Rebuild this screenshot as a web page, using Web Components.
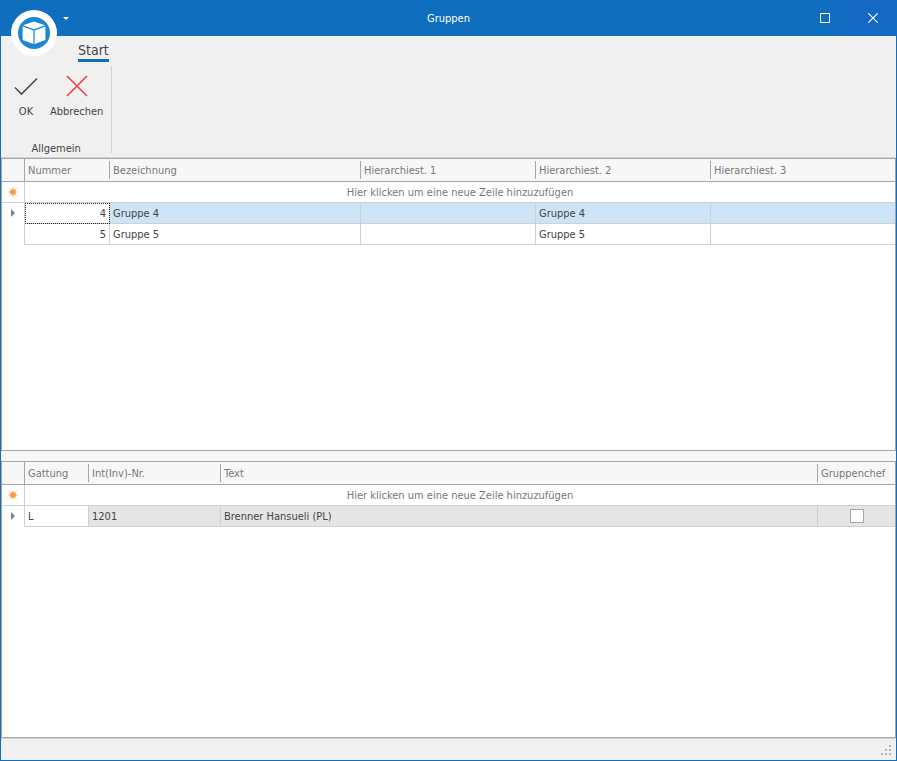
<!DOCTYPE html>
<html lang="de">
<head>
<meta charset="utf-8">
<title>Gruppen</title>
<style>
    html, body {
        height: 100%;
        margin: 0;
    }
    body {
        font: 11px/14px "DejaVu Sans Condensed", "DejaVu Sans", sans-serif;
        color: #444;
    }
</style>
</head>
<body>
<app-window>
    <title-bar slot="title">Gruppen</title-bar>
    <ribbon-bar slot="ribbon" tab="Start">
        <ribbon-group label="Allgemein">
            <ribbon-button icon="check">OK</ribbon-button>
            <ribbon-button icon="cross">Abbrechen</ribbon-button>
        </ribbon-group>
    </ribbon-bar>
    <data-grid id="groups" label="Gruppen"></data-grid>
    <data-grid id="members" label="Mitglieder"></data-grid>
    <status-bar slot="status"></status-bar>
</app-window>

<script>
class AppWindow extends HTMLElement {
    constructor() {
        super();
        this.attachShadow({ mode: 'open' });
    }

    connectedCallback() {
        this.shadowRoot.innerHTML = `
            <style>
                :host {
                    display: flex;
                    flex-direction: column;
                    box-sizing: border-box;
                    height: 100%;
                    border: 1px solid #0f6ebe;
                    border-top: 0;
                    background: #f0f0f0;
                }
                main {
                    flex: 1;
                    min-height: 0;
                    display: flex;
                    flex-direction: column;
                    gap: 10px;
                    background: #f7f7f7;
                }
                ::slotted(#groups) {
                    flex: 293 1 0;
                }
                ::slotted(#members) {
                    flex: 277 1 0;
                }
            </style>
            <slot name="title"></slot>
            <slot name="ribbon"></slot>
            <main><slot></slot></main>
            <slot name="status"></slot>
        `;
    }
}

class TitleBar extends HTMLElement {
    constructor() {
        super();
        this.attachShadow({ mode: 'open' });
    }

    connectedCallback() {
        this.shadowRoot.innerHTML = `
            <style>
                :host {
                    position: relative;
                    display: grid;
                    grid-template-columns: 1fr auto 1fr;
                    align-items: center;
                    height: 36px;
                    background: linear-gradient(90deg, #106ebe 92%, #1469c4 95%);
                    color: #fff;
                }
                button {
                    display: flex;
                    align-items: center;
                    justify-content: center;
                    box-sizing: border-box;
                    height: 36px;
                    padding: 0;
                    border: 0;
                    background: none;
                    color: inherit;
                }
                .logo {
                    position: absolute;
                    left: 10px;
                    top: 10px;
                    width: 46px;
                    height: 46px;
                    z-index: 1;
                }
                .menu {
                    width: 16px;
                    margin-left: 57px;
                }
                .title {
                    padding-top: 2px;
                }
                .buttons {
                    display: flex;
                    justify-content: flex-end;
                }
                .buttons button {
                    width: 48px;
                    padding-left: 2px;
                }
            </style>
            <button class="logo" aria-label="Anwendungsmenü">
                <svg width="46" height="46" viewBox="0 0 46 46">
                    <circle cx="23" cy="23" r="23" fill="#fff"/>
                    <circle cx="23" cy="23" r="16" fill="#1c86d1"/>
                    <path d="M23 11.5 34 15.2 23 19.2 12 15.2Z" fill="#fff"/>
                    <path d="M11.6 16.4 22.4 20.4V34L11.6 30Z" fill="#fff"/>
                    <path d="M34.4 16.4 23.6 20.4V34L34.4 30Z" fill="#fff"/>
                </svg>
            </button>
            <button class="menu" aria-label="Schnellzugriff">
                <svg width="6" height="3" viewBox="0 0 6 3"><path d="M0 0H6L3 3Z" fill="#fff"/></svg>
            </button>
            <span class="title"><slot></slot></span>
            <div class="buttons">
                <button aria-label="Maximieren">
                    <svg width="10" height="10" viewBox="0 0 10 10"><path d="M.5.5H9.5V9.5H.5Z" fill="none" stroke="#fff"/></svg>
                </button>
                <button aria-label="Schliessen">
                    <svg width="10" height="10" viewBox="0 0 10 10"><path d="M.3.3 9.7 9.7M9.7.3.3 9.7" fill="none" stroke="#fff" stroke-width="1.1"/></svg>
                </button>
            </div>
        `;
    }
}

class RibbonBar extends HTMLElement {
    constructor() {
        super();
        this.attachShadow({ mode: 'open' });
    }

    connectedCallback() {
        this.shadowRoot.innerHTML = `
            <style>
                :host {
                    display: block;
                    background: #f0f0f0;
                    border-bottom: 1px solid #d2d2d2;
                }
                nav {
                    display: flex;
                    padding-left: 77px;
                }
                button {
                    height: 26px;
                    padding: 4px 0 0;
                    border: 0;
                    border-bottom: 3px solid #106ebe;
                    background: none;
                    font: inherit;
                    font-size: 14px;
                    color: #444;
                }
                .page {
                    display: flex;
                    padding: 4px 0;
                }
            </style>
            <nav><button>${this.getAttribute('tab')}</button></nav>
            <div class="page"><slot></slot></div>
        `;
    }
}

class RibbonGroup extends HTMLElement {
    constructor() {
        super();
        this.attachShadow({ mode: 'open' });
    }

    connectedCallback() {
        this.shadowRoot.innerHTML = `
            <style>
                :host {
                    display: flex;
                    flex-direction: column;
                    justify-content: space-between;
                    height: 87px;
                    border-right: 1px solid #d2d2d2;
                }
                .items {
                    display: flex;
                    padding: 1px 4px 0 5px;
                }
                .label {
                    line-height: 8px;
                    text-align: center;
                }
            </style>
            <div class="items"><slot></slot></div>
            <div class="label">${this.getAttribute('label')}</div>
        `;
    }
}

const icons = {
    check: '<path d="M5 16.5 11.5 23 27 7.5" fill="none" stroke="#4d4d4d" stroke-width="1.6"/>',
    cross: '<path d="M6 5 26 25M26 5 6 25" fill="none" stroke="#ef4240" stroke-width="1.6"/>'
};

class RibbonButton extends HTMLElement {
    constructor() {
        super();
        this.attachShadow({ mode: 'open' });
    }

    connectedCallback() {
        this.shadowRoot.innerHTML = `
            <style>
                :host {
                    display: block;
                }
                button {
                    display: flex;
                    flex-direction: column;
                    align-items: center;
                    gap: 2px;
                    min-width: 40px;
                    padding: 4px;
                    border: 0;
                    background: none;
                    font: inherit;
                    color: #444;
                }
            </style>
            <button>
                <svg width="32" height="32" viewBox="0 0 32 32">${icons[this.getAttribute('icon')]}</svg>
                <span><slot></slot></span>
            </button>
        `;
    }
}

class DataGrid extends HTMLElement {
    constructor() {
        super();
        this.attachShadow({ mode: 'open' });
    }

    load(columns, rows) {
        const cell = (column, value, row, i) => {
            const classes = [column.align || ''];
            if (row.current && i === 0) {
                classes.push(row.focus ? 'focus' : 'plain');
            }
            if (column.type === 'check') {
                classes.push('check');
            }
            const content = column.type === 'check'
                ? `<input type="checkbox" aria-label="${column.title}"${value ? ' checked' : ''}>`
                : value;
            return `<td class="${classes.join(' ').trim()}">${content}</td>`;
        };

        this.shadowRoot.innerHTML = `
            <style>
                :host {
                    display: block;
                    box-sizing: border-box;
                    min-height: 0;
                    overflow: hidden;
                    border: 1px solid #a6a6a6;
                    background: #fff;
                }
                table {
                    width: 100%;
                    table-layout: fixed;
                    border-spacing: 0;
                }
                th, td {
                    box-sizing: border-box;
                    padding: 2px 3px 0;
                    border-right: 1px solid #d0d0d0;
                    border-bottom: 1px solid #d0d0d0;
                    text-align: left;
                    font-weight: normal;
                    white-space: nowrap;
                    overflow: hidden;
                }
                tr > :last-child {
                    border-right: 0;
                }
                thead th {
                    height: 23px;
                    border-right: 0;
                    border-bottom-color: #a6a6a6;
                    background: linear-gradient(#a6a6a6, #a6a6a6) right center / 1px 18px no-repeat #f7f7f7;
                    color: #777;
                }
                thead th:first-child {
                    background-size: 1px 100%;
                }
                thead th:last-child {
                    background-image: none;
                }
                td, tbody th {
                    height: 21px;
                }
                tbody th {
                    padding: 0;
                    text-align: center;
                    border-bottom-color: transparent;
                }
                tbody tr:first-child th {
                    border-bottom-color: #d0d0d0;
                }
                th svg {
                    display: block;
                    margin: auto;
                }
                .new {
                    text-align: center;
                    color: #777;
                }
                .right {
                    text-align: right;
                }
                .center {
                    text-align: center;
                }
                .check {
                    padding: 0;
                }
                .selected td {
                    background: #cde4f7;
                }
                .inactive td {
                    background: #e5e5e5;
                }
                tr td.plain, tr td.focus {
                    background: #fff;
                }
                .focus {
                    outline: 1px dotted #222;
                    outline-offset: -1px;
                }
                input {
                    appearance: none;
                    display: block;
                    box-sizing: border-box;
                    width: 14px;
                    height: 14px;
                    margin: auto;
                    border: 1px solid #a6a6a6;
                    background: #fff;
                }
            </style>
            <table aria-label="${this.getAttribute('label')}">
                <colgroup>
                    <col style="width: 23px">
                    ${columns.map(c => `<col${c.width ? ` style="width: ${c.width}px"` : ''}>`).join('')}
                </colgroup>
                <thead>
                    <tr><th></th>${columns.map(c => `<th scope="col">${c.title}</th>`).join('')}</tr>
                </thead>
                <tbody>
                    <tr>
                        <th>
                            <svg width="10" height="10" viewBox="0 0 10 10">
                                <circle cx="5" cy="5" r="2.8" fill="#fb9a3c"/>
                                <path d="M5 .5V9.5M.5 5H9.5M1.5 1.5 8.5 8.5M8.5 1.5 1.5 8.5" stroke="#fb9a3c" stroke-width=".9"/>
                            </svg>
                        </th>
                        <td class="new" colspan="${columns.length}">Hier klicken um eine neue Zeile hinzuzufügen</td>
                    </tr>
                    ${rows.map(row => `
                        <tr class="${row.current || ''}">
                            <th>${row.current ? '<svg width="4" height="8" viewBox="0 0 4 8"><path d="M0 0 4 4 0 8Z" fill="#808080"/></svg>' : ''}</th>
                            ${row.values.map((value, i) => cell(columns[i], value, row, i)).join('')}
                        </tr>
                    `).join('')}
                </tbody>
            </table>
        `;
    }
}

class StatusBar extends HTMLElement {
    constructor() {
        super();
        this.attachShadow({ mode: 'open' });
    }

    connectedCallback() {
        this.shadowRoot.innerHTML = `
            <style>
                :host {
                    display: flex;
                    justify-content: flex-end;
                    align-items: flex-end;
                    box-sizing: border-box;
                    height: 22px;
                    padding: 5px;
                    border-top: 1px solid #d2d2d2;
                }
            </style>
            <svg width="10" height="10" viewBox="0 0 10 10">
                <path d="M8 0h2v2h-2ZM4 4h2v2h-2ZM8 4h2v2h-2ZM0 8h2v2h-2ZM4 8h2v2h-2ZM8 8h2v2h-2Z" fill="#b4b4b4"/>
            </svg>
        `;
    }
}

customElements.define('app-window', AppWindow);
customElements.define('title-bar', TitleBar);
customElements.define('ribbon-bar', RibbonBar);
customElements.define('ribbon-group', RibbonGroup);
customElements.define('ribbon-button', RibbonButton);
customElements.define('data-grid', DataGrid);
customElements.define('status-bar', StatusBar);

document.getElementById('groups').load(
    [
        { title: 'Nummer', width: 85, align: 'right' },
        { title: 'Bezeichnung', width: 251 },
        { title: 'Hierarchiest. 1', width: 175 },
        { title: 'Hierarchiest. 2', width: 175 },
        { title: 'Hierarchiest. 3' }
    ],
    [
        { current: 'selected', focus: true, values: ['4', 'Gruppe 4', '', 'Gruppe 4', ''] },
        { values: ['5', 'Gruppe 5', '', 'Gruppe 5', ''] }
    ]
);

document.getElementById('members').load(
    [
        { title: 'Gattung', width: 64 },
        { title: 'Int(Inv)-Nr.', width: 132 },
        { title: 'Text' },
        { title: 'Gruppenchef', width: 77, type: 'check', align: 'center' }
    ],
    [
        { current: 'inactive', values: ['L', '1201', 'Brenner Hansueli (PL)', false] }
    ]
);
</script>
</body>
</html>
